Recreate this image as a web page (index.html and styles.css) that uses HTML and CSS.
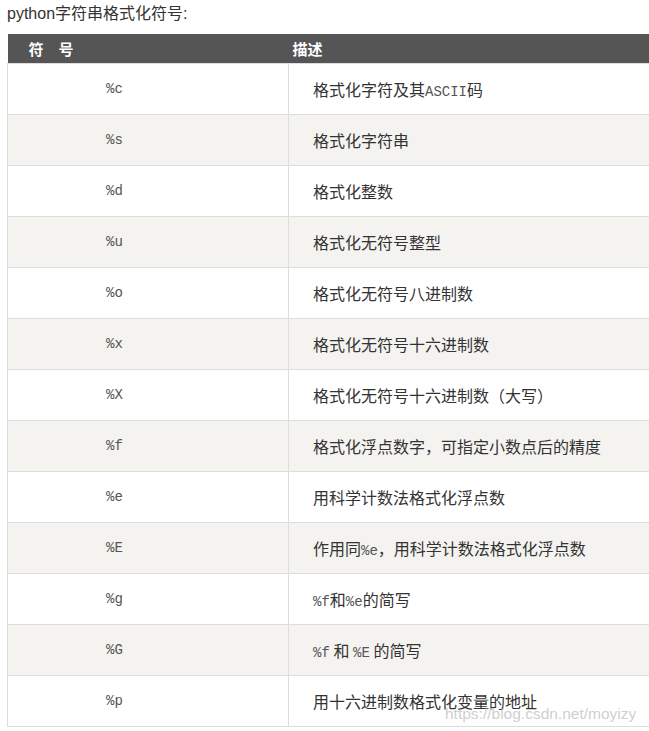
FILE: index.html
```html
<!DOCTYPE html>
<html lang="zh">
<head>
<meta charset="utf-8">
<link rel="stylesheet" href="styles.css">
</head>
<body>
<div class="page">
  <p class="title">python字符串格式化符号:</p>
  <table class="fmt">
    <thead>
      <tr><th class="c1"><span class="sp">符</span>号</th><th class="c2">描述</th></tr>
    </thead>
    <tbody>
      <tr><td class="code">%c</td><td>格式化字符及其<span class="m">ASCII</span>码</td></tr>
      <tr><td class="code">%s</td><td>格式化字符串</td></tr>
      <tr><td class="code">%d</td><td>格式化整数</td></tr>
      <tr><td class="code">%u</td><td>格式化无符号整型</td></tr>
      <tr><td class="code">%o</td><td>格式化无符号八进制数</td></tr>
      <tr><td class="code">%x</td><td>格式化无符号十六进制数</td></tr>
      <tr><td class="code">%X</td><td>格式化无符号十六进制数（大写）</td></tr>
      <tr><td class="code">%f</td><td>格式化浮点数字，可指定小数点后的精度</td></tr>
      <tr><td class="code">%e</td><td>用科学计数法格式化浮点数</td></tr>
      <tr><td class="code">%E</td><td>作用同<span class="m">%e</span>，用科学计数法格式化浮点数</td></tr>
      <tr><td class="code">%g</td><td><span class="m">%f</span>和<span class="m">%e</span>的简写</td></tr>
      <tr><td class="code">%G</td><td><span class="m">%f</span> 和 <span class="m">%E</span> 的简写</td></tr>
      <tr><td class="code">%p</td><td>用十六进制数格式化变量的地址</td></tr>
    </tbody>
  </table>
  <div class="watermark">https://blog.csdn.net/moyizy</div>
</div>
</body>
</html>
```
FILE: styles.css
```css
html, body {
  margin: 0;
  padding: 0;
  background: #fff;
  overflow: hidden;
}
.page {
  position: relative;
  width: 649px;
  height: 731px;
  overflow: hidden;
}
.title {
  margin: 0;
  padding: 4px 0 0 7px;
  height: 30px;
  box-sizing: border-box;
  font-family: "Liberation Sans", "Noto Sans CJK SC", sans-serif;
  font-size: 16px;
  line-height: 20px;
  color: #333;
}
.fmt {
  margin-left: 7px;
  margin-top: 4px;
  width: 660px;
  border-collapse: collapse;
  table-layout: fixed;
  font-family: "Noto Sans CJK SC", sans-serif;
  font-size: 16px;
  color: #333;
}
.fmt th {
  background: #555;
  color: #fff;
  height: 29px;
  padding: 0;
  text-align: left;
  font-weight: bold;
  font-size: 15px;
  vertical-align: middle;
}
.fmt th.c1 {
  width: 281px;
  padding-left: 21px;
  box-sizing: border-box;
}
.sp {
  margin-right: 15px;
}
.fmt th.c2 {
  padding-left: 4px;
}
.fmt td {
  height: 51px;
  padding: 0 0 0 24px;
  border: 1px solid #ddd;
  vertical-align: middle;
  box-sizing: border-box;
}
.fmt td.code {
  padding-left: 98px;
  font-family: "Liberation Mono", monospace;
  font-size: 14px;
  color: #555;
}
.fmt tbody tr:nth-child(even) td {
  background: #f4f3f0;
}
.m {
  font-family: "Liberation Mono", monospace;
  font-size: 14px;
  color: #555;
}
.watermark {
  position: absolute;
  left: 445px;
  top: 705px;
  font-family: "Liberation Sans", sans-serif;
  font-size: 15.5px;
  color: rgba(190, 190, 190, 0.75);
  white-space: nowrap;
}
```
